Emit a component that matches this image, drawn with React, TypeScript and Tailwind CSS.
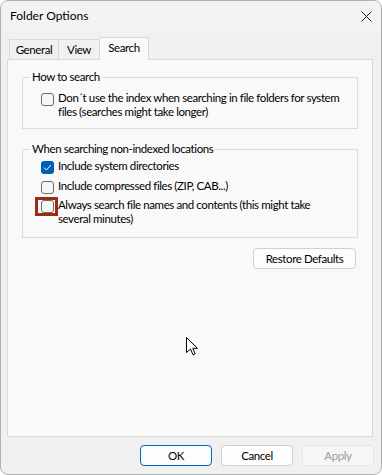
import React from "react";

function Box({ checked }: { checked?: boolean }) {
  if (checked) {
    return (
      <span className="mt-[2px] flex h-[13px] w-[13px] shrink-0 items-center justify-center rounded-[3px] bg-[#005fb8]">
        <svg width="9" height="7" viewBox="0 0 9 7">
          <path d="M1 3.6 L3.4 6 L8 1" fill="none" stroke="#ffffff" strokeWidth="1" />
        </svg>
      </span>
    );
  }
  return <span className="mt-[2px] block h-[13px] w-[13px] shrink-0 rounded-[3px] border border-[#6a6a6a] bg-[#f7f7f7]" />;
}

export default function App() {
  return (
    <div className="h-[475px] w-[382px] bg-white">
      <div className="relative flex h-[475px] w-[382px] flex-col overflow-hidden rounded-[8px] border border-[#b0b0b0] bg-[#f0f0f0] font-['Lato','Liberation_Sans',sans-serif] text-[11.5px] leading-[14px] tracking-[-0.4px] text-black">
        <div className="flex h-[30px] shrink-0 items-center justify-between bg-[#f3f3f3] pl-[9px] pr-[9px]">
          <span className="text-[12px] tracking-[0px]">Folder Options</span>
          <svg width="11" height="11" viewBox="0 0 11 11" className="mt-[1px]">
            <path d="M0.5 0.5 L10.5 10.5 M10.5 0.5 L0.5 10.5" stroke="#1a1a1a" strokeWidth="1" fill="none" />
          </svg>
        </div>

        <div className="flex h-[28px] shrink-0 items-end pl-[8px]">
          <div className="flex h-[20px] w-[49px] items-center justify-center border-l border-t border-[#d9d9d9] bg-[#f0f0f0] pt-[1px]">General</div>
          <div className="flex h-[20px] w-[41px] items-center justify-center border-l border-t border-[#d9d9d9] bg-[#f0f0f0] pt-[1px]">View</div>
          <div className="relative z-10 mb-[-1px] flex h-[23px] w-[50px] items-center justify-center border-l border-r border-t border-[#d9d9d9] bg-[#f9f9f9] pb-[2px]">Search</div>
        </div>

        <div className="ml-[6px] mr-[8px] h-[378px] shrink-0 border border-[#d9d9d9] bg-[#f9f9f9] px-[14px] pt-[10px]">
          <fieldset className="border border-[#dcdcdc] pb-[9px]">
            <legend className="ml-[7px] px-[2px] leading-[14px]">How to search</legend>
            <div className="mt-[7px] flex items-start pl-[18px]">
              <Box />
              <span className="ml-[4px] whitespace-nowrap">
                Don´t use the index when searching in file folders for system
                <br />
                files (searches might take longer)
              </span>
            </div>
          </fieldset>

          <fieldset className="mt-[13px] border border-[#dcdcdc] pb-[11px]">
            <legend className="ml-[7px] px-[2px] leading-[14px]">When searching non-indexed locations</legend>
            <div className="mt-[3px] flex items-start pl-[18px]">
              <Box checked />
              <span className="ml-[4px]">Include system directories</span>
            </div>
            <div className="mt-[5px] flex items-start pl-[18px]">
              <Box />
              <span className="ml-[4px]">Include compressed files (ZIP, CAB...)</span>
            </div>
            <div className="mt-[4px] flex items-start pl-[18px]">
              <span className="relative shrink-0">
                <Box />
                <span className="absolute left-[-6px] top-[-1px] h-[19px] w-[23px] border-[3px] border-[#9c2b16]" />
              </span>
              <span className="ml-[4px] whitespace-nowrap">
                Always search file names and contents (this might take
                <br />
                several minutes)
              </span>
            </div>
          </fieldset>

          <div className="mt-[10px] flex justify-end pr-[2px]">
            <div className="flex h-[21px] w-[103px] items-center justify-center rounded-[4px] border border-[#d0d0d0] bg-[#fdfdfd]">Restore Defaults</div>
          </div>
        </div>

        <div className="flex shrink-0 justify-end gap-[9px] pr-[7px] pt-[8px]">
          <div className="flex h-[21px] w-[72px] items-center justify-center rounded-[4px] border border-[#0067c0] bg-[#fdfdfd]">OK</div>
          <div className="flex h-[21px] w-[72px] items-center justify-center rounded-[4px] border border-[#d0d0d0] bg-[#fdfdfd]">Cancel</div>
          <div className="flex h-[21px] w-[72px] items-center justify-center rounded-[4px] border border-[#e5e5e5] bg-[#f6f6f6] text-[#9d9d9d]">Apply</div>
        </div>

        <svg className="absolute left-[185px] top-[336px]" width="13" height="20" viewBox="0 0 13 20">
          <path d="M0.5 0.5 L0.5 15.5 L4.5 12 L7 17.8 L9.2 16.9 L6.8 11.3 L11.5 11.3 Z" fill="#ffffff" stroke="#000000" strokeWidth="1" strokeLinejoin="miter" />
        </svg>
      </div>
    </div>
  );
}
